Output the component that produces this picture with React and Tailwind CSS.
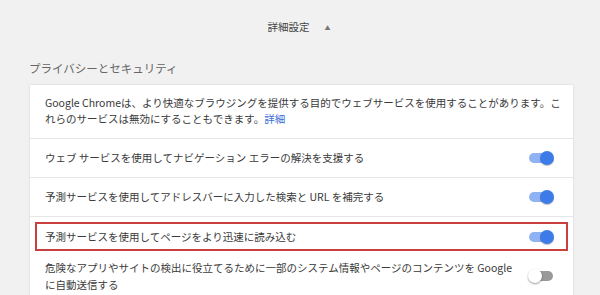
import React from 'react'

function Toggle({ on }) {
  if (on) {
    return (
      <div className="relative w-[26px] h-[14px] shrink-0">
        <div className="absolute left-[1px] right-[4px] top-[2px] h-[10px] rounded-full bg-[#8fb2f2]" />
        <div className="absolute right-0 top-0 w-[14px] h-[14px] rounded-full bg-[#3d7ce8] shadow-[0_1px_1px_rgba(0,0,0,0.25)]" />
      </div>
    )
  }
  return (
    <div className="relative w-[26px] h-[14px] shrink-0">
      <div className="absolute left-[4px] right-[1px] top-[2px] h-[10px] rounded-full bg-[#9a9a9a]" />
      <div className="absolute left-0 top-0 w-[14px] h-[14px] rounded-full bg-white shadow-[0_1px_2px_rgba(0,0,0,0.4)]" />
    </div>
  )
}

function Row({ children, on }) {
  return (
    <div className="h-[39px] flex items-center justify-between pl-[15px] pr-[19px] border-b border-[#e6e6e6]">
      <span className="whitespace-nowrap">{children}</span>
      <Toggle on={on} />
    </div>
  )
}

export default function App() {
  return (
    <div
      className="w-[600px] h-[295px] overflow-hidden bg-[#f1f1f1] text-[#3a3a3a] text-[10.5px]"
      style={{ fontFamily: '"Noto Sans CJK JP", "Noto Sans", sans-serif' }}
    >
      {/* 詳細設定 */}
      <div className="h-[54px] flex items-center justify-center gap-[15px] pr-[2px]">
        <span className="text-[10.5px] text-[#444]">詳細設定</span>
        <span className="text-[6px] text-[#777]">▲</span>
      </div>

      <div className="h-[31px] pl-[29px] pt-[7px] leading-[14px] text-[11.5px] text-[#666]">
        プライバシーとセキュリティ
      </div>

      <div className="ml-[30px] w-[543px] bg-white shadow-[0_0_2px_rgba(0,0,0,0.15)]">
        <div className="pl-[15px] pr-[16px] pt-[10px] pb-[11px] leading-[16px] border-b border-[#e6e6e6]">
          <div className="whitespace-nowrap">
            Google Chromeは、より快適なブラウジングを提供する目的でウェブサービスを使用することがあります。こ
          </div>
          <div className="whitespace-nowrap">
            れらのサービスは無効にすることもできます。<span className="text-[#3b6fd8]">詳細</span>
          </div>
        </div>

        <Row on>ウェブ サービスを使用してナビゲーション エラーの解決を支援する</Row>
        <Row on>予測サービスを使用してアドレスバーに入力した検索と URL を補完する</Row>

        <div className="h-[37px] pt-[5px] px-[5px]">
          <div className="h-[29px] border-2 border-[#c9403f] flex items-center justify-between pl-[8px] pr-[12px]">
            <span className="whitespace-nowrap">予測サービスを使用してページをより迅速に読み込む</span>
            <Toggle on />
          </div>
        </div>

        <div className="flex items-center justify-between pl-[15px] pr-[19px] pt-[5px] pb-[6px] leading-[17px]">
          <div>
            <div className="whitespace-nowrap">
              危険なアプリやサイトの検出に役立てるために一部のシステム情報やページのコンテンツを Google
            </div>
            <div className="whitespace-nowrap">に自動送信する</div>
          </div>
          <Toggle />
        </div>
      </div>
    </div>
  )
}
